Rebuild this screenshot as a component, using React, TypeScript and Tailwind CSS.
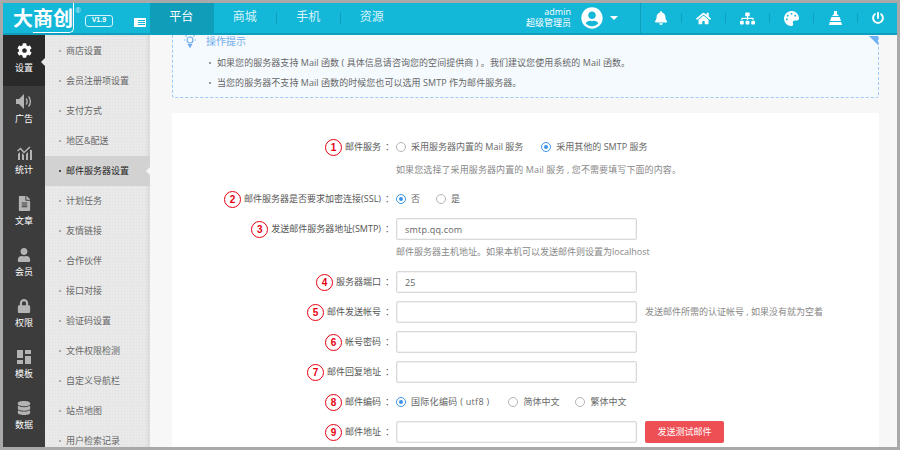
import { ReactNode } from 'react'
import {
  FaBell,
  FaCog,
  FaDatabase,
  FaFileAlt,
  FaHome,
  FaLock,
  FaPalette,
  FaPowerOff,
  FaSitemap,
  FaUser,
  FaUserCircle
} from 'react-icons/fa'

const railItems = [
  { label: '设置', icon: <FaCog size={15} />, active: true },
  {
    label: '广告',
    icon: (
      <svg width="17" height="15" viewBox="0 0 17 15" fill="currentColor">
        <path d="M0 5h3l5-5v15l-5-5H0z" />
        <path d="M10 4.5c1.5 1.5 1.5 4.5 0 6M12.5 2.5c2.5 2.5 2.5 7.5 0 10" fill="none" stroke="currentColor" strokeWidth="1.4" />
      </svg>
    )
  },
  {
    label: '统计',
    icon: (
      <svg width="15" height="14" viewBox="0 0 15 14" fill="currentColor">
        <path d="M1 14V8l2-2v8zM5 14V7l2 2v5zM9 14V8l2-2v8zM13 14V4h2v10z" />
        <path d="M0.5 5L3.5 2.5L7 6.5L13 1" fill="none" stroke="currentColor" strokeWidth="1.5" />
      </svg>
    )
  },
  { label: '文章', icon: <FaFileAlt size={15} /> },
  { label: '会员', icon: <FaUser size={14} /> },
  { label: '权限', icon: <FaLock size={14} /> },
  {
    label: '模板',
    icon: (
      <svg width="14" height="14" viewBox="0 0 14 14" fill="currentColor">
        <path d="M0 0h6v8H0zM8 0h6v4H8zM8 6h6v8H8zM0 10h6v4H0z" />
      </svg>
    )
  },
  { label: '数据', icon: <FaDatabase size={14} /> }
]

const subItems = [
  '商店设置',
  '会员注册项设置',
  '支付方式',
  '地区&配送',
  '邮件服务器设置',
  '计划任务',
  '友情链接',
  '合作伙伴',
  '接口对接',
  '验证码设置',
  '文件权限检测',
  '自定义导航栏',
  '站点地图',
  '用户检索记录'
]

const topIcons = [
  <FaBell size={14} />,
  <FaHome size={15} />,
  <FaSitemap size={15} />,
  <FaPalette size={15} />,
  <svg width="13" height="14" viewBox="0 0 13 14" fill="#fff">
    <path d="M5 0h3v3l2 2H3l2-2zM2.5 6h8L12 10H1zM.8 11h11.4l.8 3H0z" />
  </svg>,
  <FaPowerOff size={12} />
]

function Radio({ checked, children }: { checked?: boolean; children: ReactNode }) {
  return (
    <span className="flex items-center gap-[5px]">
      <span
        className={`w-[10px] h-[10px] rounded-full border flex items-center justify-center bg-white ${
          checked ? 'border-[#3d93ea]' : 'border-[#b5b5b5]'
        }`}
      >
        {checked && <span className="w-1 h-1 rounded-full bg-[#3d93ea]" />}
      </span>
      <span>{children}</span>
    </span>
  )
}

function Row({ no, label, children }: { no: number; label: string; children: ReactNode }) {
  return (
    <div className="flex items-center h-[22px]">
      <div className="w-[221px] shrink-0 flex items-center justify-end gap-[3px] text-[#555]">
        <span className="w-[17px] h-[17px] rounded-full border border-[#e60012] text-[#e60012] flex items-center justify-center text-[10px] font-bold font-['Liberation_Sans',sans-serif]">
          {no}
        </span>
        <span>{label}</span>
        <span className="ml-px w-[8px]">：</span>
      </div>
      <div className="ml-[3px] flex items-center gap-2 text-[#666]">{children}</div>
    </div>
  )
}

function TextInput({ value }: { value?: string }) {
  return (
    <input
      readOnly
      defaultValue={value}
      className="w-[241px] h-[22px] px-2 border border-[#d9d9d9] rounded-[2px] bg-white shadow-[inset_0_0_0_1px_#f3f3f3] text-[9px] tracking-[0.2px] text-[#666] outline-none"
    />
  )
}

export default function App() {
  return (
    <div className="w-[900px] h-[450px] border-[3px] border-[#a9a9a9] overflow-hidden flex flex-col bg-[#f7f7f7] text-[9px] font-['Open_Sans','Noto_Sans_CJK_SC',sans-serif]">
      <header className="h-[32px] shrink-0 flex bg-[#13b7d8] border-b-2 border-[#0e9fbd] text-white">
        <div className="w-[147px] shrink-0 flex items-center pl-[10px]">
          <span className="text-[20px] leading-none font-bold font-['Noto_Sans_CJK_SC',sans-serif]">
            大<span className="border-b border-r border-white rounded-br-[5px]">商创</span>
          </span>
          <span className="text-[7px] self-start mt-[3px] ml-[1px] text-[#cdeff7]">®</span>
          <span className="ml-[4px] mt-[5px] w-[28px] h-[12px] border border-[#d5f3fa] rounded-[3px] flex items-center justify-center text-[7px] font-bold font-['Liberation_Sans',sans-serif]">
            V1.9
          </span>
          <svg width="12" height="9" viewBox="0 0 12 9" className="ml-[21px] mt-[9px]">
            <path d="M0 0h12v9H0z M4 2v1h7V2z M4 4v1h7V4z M4 6v1h7V6z" fill="#fff" fillRule="evenodd" />
          </svg>
        </div>
        <nav className="flex text-[12px]">
          {['平台', '商城', '手机', '资源'].map((tab, i) => (
            <div key={tab} className={`flex items-center ${i === 0 ? 'bg-[#0f9db9]' : ''}`}>
              <span className={`w-[62.5px] text-center pb-[2px] ${i === 0 ? '' : 'text-[#d8f4fa]'}`}>{tab}</span>
              <span className={`w-px h-[12px] ${i === 3 ? '' : 'bg-[#0e9fbd]'}`} />
            </div>
          ))}
        </nav>
        <div className="ml-auto flex items-center">
          <div className="text-right leading-[11px] pb-[3px]">
            <div>admin</div>
            <div>超级管理员</div>
          </div>
          <FaUserCircle size={22} className="ml-[10px]" />
          <span className="ml-[7px] w-0 h-0 border-x-[4px] border-x-transparent border-t-[4px] border-t-white" />
          <span className="ml-[22px] w-px h-full bg-[#0e9fbd]" />
          {topIcons.map((icon, i) => (
            <div key={i} className="flex items-center">
              <span className={`flex justify-center ${i === 0 ? 'w-[40px]' : i === 5 ? 'w-[39px]' : 'w-[43px]'}`}>
                {icon}
              </span>
              {i < topIcons.length - 1 && <span className="w-px h-[10px] bg-[#0e9fbd]" />}
            </div>
          ))}
        </div>
      </header>

      <div className="flex flex-1 min-h-0">
        <aside className="w-[42px] shrink-0 bg-[#3c3c3c] text-white">
          {railItems.map((item) => (
            <div
              key={item.label}
              className={`relative h-[51px] flex flex-col items-center pt-[8px] gap-[4px] ${
                item.active ? 'bg-[#2a2a2a]' : ''
              }`}
            >
              <span className={`h-[15px] flex items-center ${item.active ? '' : 'text-[#b4b4b4]'}`}>{item.icon}</span>
              <span className="leading-[12px]">{item.label}</span>
              {item.active && (
                <span className="absolute right-0 top-[23px] w-0 h-0 border-y-[4px] border-y-transparent border-r-[4px] border-r-[#e8e8e8]" />
              )}
            </div>
          ))}
        </aside>

        <aside className="w-[105px] shrink-0 overflow-hidden bg-[#e9e9e9] bg-[radial-gradient(#dfdfdf_1px,transparent_1px)] bg-[size:3px_3px] shadow-[inset_-3px_0_3px_rgba(0,0,0,0.05)] text-[#666]">
          <div className="mt-[1px]">
            {subItems.map((item) => {
              const active = item === '邮件服务器设置'
              return (
                <div
                  key={item}
                  className={`relative h-[30px] flex items-center pl-[14px] gap-[5px] ${
                    active ? 'bg-[#d2d2d2] text-[#222]' : ''
                  }`}
                >
                  <span className={`w-[2px] h-[2px] rounded-full ${active ? 'bg-[#222]' : 'bg-[#999]'}`} />
                  <span>{item}</span>
                  {active && (
                    <span className="absolute right-0 top-[11px] w-0 h-0 border-y-[4px] border-y-transparent border-r-[4px] border-r-[#f7f7f7]" />
                  )}
                </div>
              )
            })}
          </div>
        </aside>

        <main className="flex-1 min-w-0 overflow-hidden pl-[22px] pr-[18px]">
          <div className="relative -mt-[11px] h-[74px] pt-[6px] pl-[10px] bg-[#f5faff] border border-dashed border-[#9cc9f5] rounded-[3px]">
            <span className="absolute right-0 top-[11px] w-0 h-0 border-l-[9px] border-l-transparent border-t-[9px] border-t-[#6fb1f5]" />
            <div className="h-[20px] flex items-center gap-[9px] text-[10px] text-[#72ade9]">
              <svg width="14" height="15" viewBox="0 0 14 15" fill="none" stroke="#72ade9" strokeWidth="1.2">
                <circle cx="7" cy="6" r="3" />
                <path d="M7 0v1M1 6h1M12 6h1M2.5 1.5l1 1M11.5 1.5l-1 1" />
                <path d="M5.5 10.5h3L7 13z" fill="#72ade9" />
              </svg>
              <span>操作提示</span>
            </div>
            <div className="mt-[5px] flex flex-col gap-[6px] text-[#666] pl-[34px] tracking-[0.05px]">
              {[
                '如果您的服务器支持 Mail 函数 ( 具体信息请咨询您的空间提供商 ) 。我们建议您使用系统的 Mail 函数。',
                '当您的服务器不支持 Mail 函数的时候您也可以选用 SMTP 作为邮件服务器。'
              ].map((line) => (
                <div key={line} className="relative h-[14px] leading-[14px]">
                  <span className="absolute -left-[8px] top-[6px] w-[2px] h-[2px] rounded-full bg-[#777]" />
                  {line}
                </div>
              ))}
            </div>
          </div>

          <section className="mt-[15px] bg-white pt-[23px] h-[340px] flex flex-col gap-2">
            <div>
              <Row no={1} label="邮件服务">
                <div className="flex gap-[18px]">
                  <Radio>采用服务器内置的 Mail 服务</Radio>
                  <Radio checked>采用其他的 SMTP 服务</Radio>
                </div>
              </Row>
              <div className="mt-px h-[21px] leading-[21px] pl-[224px] text-[#888] tracking-[0.1px]">
                如果您选择了采用服务器内置的 Mail 服务 , 您不需要填写下面的内容。
              </div>
            </div>
            <Row no={2} label="邮件服务器是否要求加密连接(SSL)">
              <div className="flex gap-4">
                <Radio checked>否</Radio>
                <Radio>是</Radio>
              </div>
            </Row>
            <div>
              <Row no={3} label="发送邮件服务器地址(SMTP)">
                <TextInput value="smtp.qq.com" />
              </Row>
              <div className="mt-px h-[22px] leading-[22px] pl-[224px] text-[#888]">
                邮件服务器主机地址。如果本机可以发送邮件则设置为localhost
              </div>
            </div>
            <Row no={4} label="服务器端口">
              <TextInput value="25" />
            </Row>
            <Row no={5} label="邮件发送帐号">
              <TextInput />
              <span className="text-[#888]">发送邮件所需的认证帐号 , 如果没有就为空着</span>
            </Row>
            <Row no={6} label="帐号密码">
              <TextInput />
            </Row>
            <Row no={7} label="邮件回复地址">
              <TextInput />
            </Row>
            <Row no={8} label="邮件编码">
              <div className="flex gap-4">
                <Radio checked>
                  <span className="inline-block mr-[3px] tracking-[0.3px]">国际化编码 ( utf8 )</span>
                </Radio>
                <Radio>简体中文</Radio>
                <Radio>繁体中文</Radio>
              </div>
            </Row>
            <Row no={9} label="邮件地址">
              <TextInput />
              <button className="w-[79px] h-[22px] rounded-[2px] bg-[#ee4f55] text-white">发送测试邮件</button>
            </Row>
          </section>
        </main>
      </div>
    </div>
  )
}
